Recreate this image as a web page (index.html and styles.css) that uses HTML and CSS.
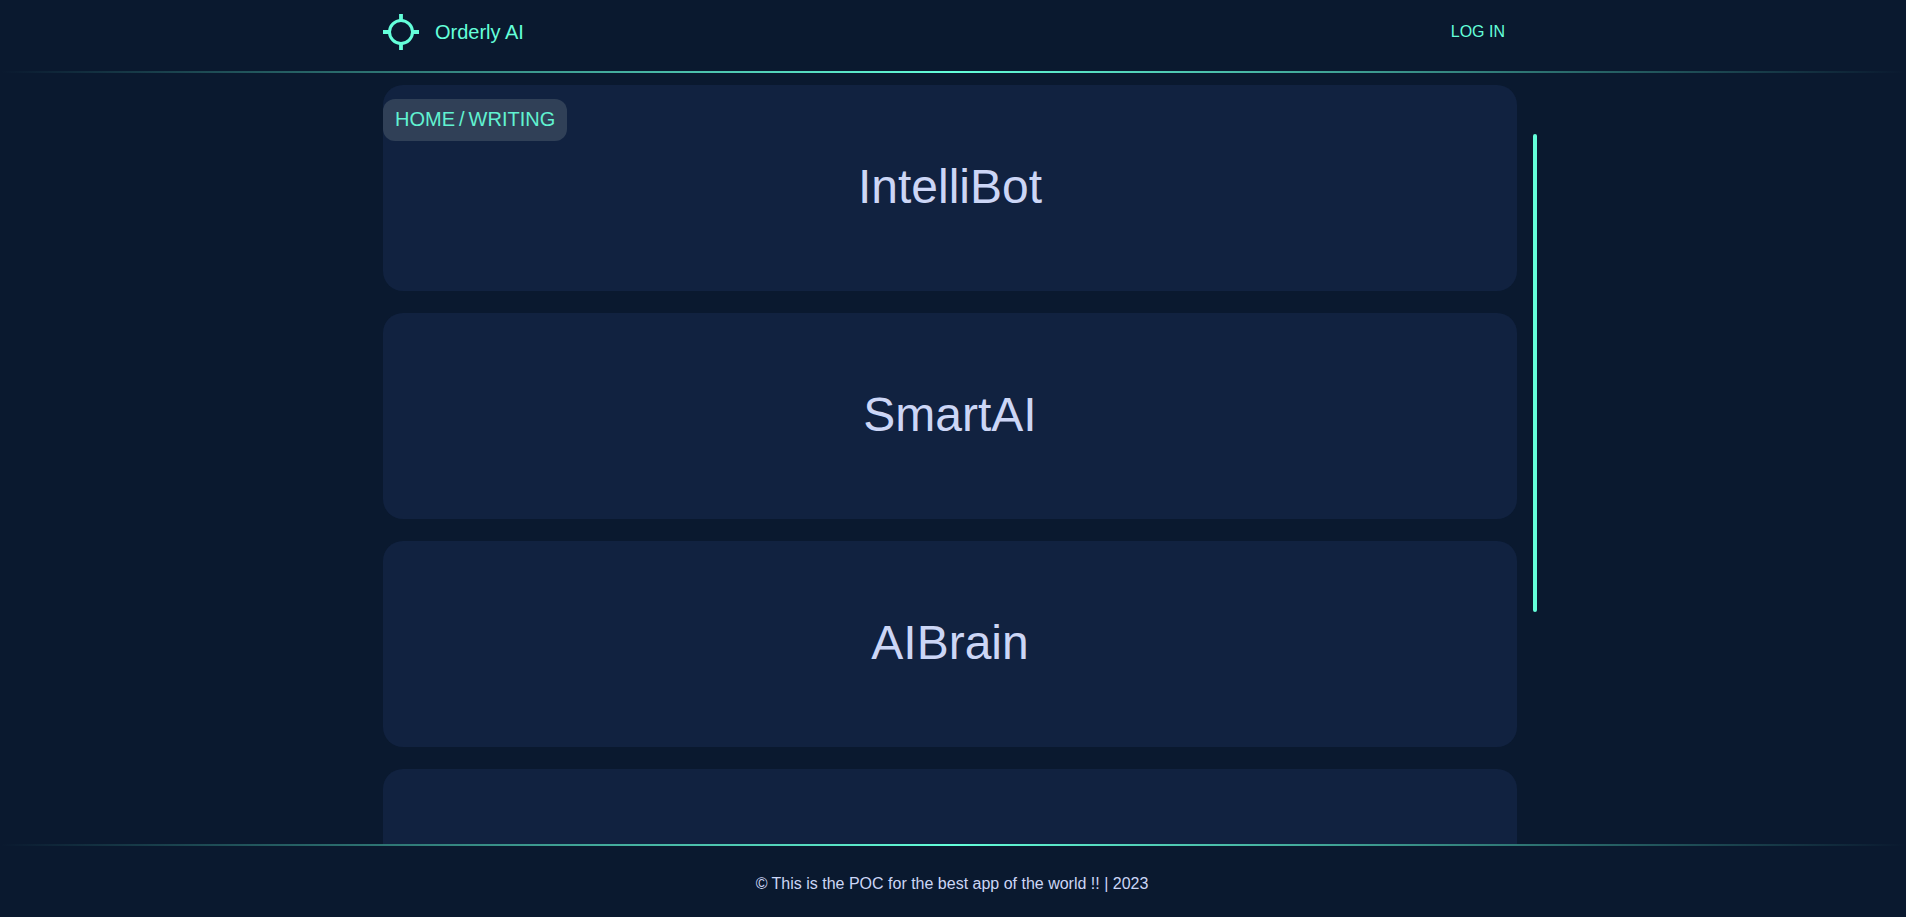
FILE: index.html
```html
<!DOCTYPE html>
<html lang="en">
<head>
  <meta charset="utf-8">
  <meta name="viewport" content="width=device-width, initial-scale=1">
  <title>Orderly AI</title>
  <link rel="stylesheet" href="styles.css">
</head>
<body class="page">
  <header class="header">
    <div class="container header-row">
      <a class="brand" href="#">
        <svg class="brand-icon" viewBox="0 0 36 36" fill="none" stroke="currentColor" aria-hidden="true">
          <circle cx="18" cy="18" r="11.5" stroke-width="3"/>
          <path d="M18 0v6M18 30v6M0 18h6M30 18h6" stroke-width="3.8"/>
        </svg>
        <span>Orderly AI</span>
      </a>
      <button class="login" type="button">LOG IN</button>
    </div>
    <div class="divider"></div>
  </header>

  <main class="main">
    <div class="container content">
      <nav class="breadcrumb" aria-label="Breadcrumb">
        <a href="#">HOME</a><span>/</span><a href="#">WRITING</a>
      </nav>
      <div class="list">
        <a class="card" href="#">IntelliBot</a>
        <a class="card" href="#">SmartAI</a>
        <a class="card" href="#">AIBrain</a>
        <a class="card" href="#" aria-label="More"></a>
      </div>
      <div class="scroll-thumb"></div>
    </div>
  </main>

  <footer class="footer">
    <div class="divider"></div>
    <p class="footer-text">© This is the POC for the best app of the world !! | 2023</p>
  </footer>
</body>
</html>
```

FILE: styles.css
```css
:root {
  --navy: #0a192f;
  --card: #112240;
  --text: #ccd6f6;
  --accent: #64ffda;
}

* {
  box-sizing: border-box;
}

a {
  color: inherit;
  text-decoration: none;
}

.page {
  display: flex;
  flex-direction: column;
  height: 100vh;
  margin: 0;
  background: var(--navy);
  color: var(--text);
  font: 16px/20px "Liberation Sans", Arial, sans-serif;
}

.container {
  width: 100%;
  max-width: 1140px;
  margin: 0 auto;
}

.divider {
  height: 2px;
  background: linear-gradient(to right, transparent, var(--accent), transparent);
}

.header-row {
  display: flex;
  align-items: center;
  justify-content: space-between;
  padding: 14px 0 21px;
  color: var(--accent);
}

.brand {
  display: flex;
  align-items: center;
  gap: 16px;
  font-size: 20px;
}

.brand-icon {
  width: 36px;
  height: 36px;
}

.login {
  padding: 8px 18px;
  border: 0;
  background: none;
  color: inherit;
  font: inherit;
  cursor: pointer;
}

.main {
  flex: 1;
  min-height: 0;
  overflow: hidden;
}

.content {
  position: relative;
  height: 100%;
  padding-top: 12px;
}

.list {
  display: flex;
  flex-direction: column;
  gap: 22px;
  margin-right: 6px;
}

.card {
  display: flex;
  flex: none;
  align-items: center;
  justify-content: center;
  height: 206px;
  padding-bottom: 2px;
  border-radius: 20px;
  background: var(--card);
  font-size: 48px;
  line-height: 56px;
}

.breadcrumb {
  position: absolute;
  top: 26px;
  left: 0;
  display: flex;
  gap: 4px;
  padding: 8px 12px 10px;
  border-radius: 12px;
  background: #304057;
  color: #61f2d1;
  font-size: 20px;
  line-height: 24px;
}

.scroll-thumb {
  position: absolute;
  top: 61px;
  right: -14px;
  width: 4px;
  height: 62%;
  border-radius: 2px;
  background: var(--accent);
}

.footer-text {
  margin: 0;
  padding: 28px 2px 23px 0;
  text-align: center;
}
```
